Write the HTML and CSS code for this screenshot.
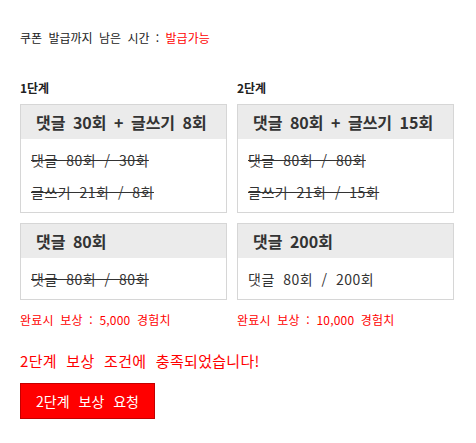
FILE: index.html
```html
<!DOCTYPE html>
<html lang="ko">
<head>
<meta charset="utf-8">
<link rel="stylesheet" href="styles.css">
</head>
<body>
<div class="page">
  <p class="timer">쿠폰 발급까지 남은 시간 : <span class="red">발급가능</span></p>
  <div class="stages">
    <div class="stage">
      <div class="stage-label">1단계</div>
      <div class="box">
        <div class="box-head">댓글 30회 + 글쓰기 8회</div>
        <div class="box-body">
          <div class="line done">댓글 80회 / 30회</div>
          <div class="line done">글쓰기 21회 / 8회</div>
        </div>
      </div>
      <div class="box">
        <div class="box-head">댓글 80회</div>
        <div class="box-body">
          <div class="line done">댓글 80회 / 80회</div>
        </div>
      </div>
      <div class="reward">완료시 보상 : 5,000 경험치</div>
    </div>
    <div class="stage">
      <div class="stage-label">2단계</div>
      <div class="box">
        <div class="box-head">댓글 80회 + 글쓰기 15회</div>
        <div class="box-body">
          <div class="line done">댓글 80회 / 80회</div>
          <div class="line done">글쓰기 21회 / 15회</div>
        </div>
      </div>
      <div class="box">
        <div class="box-head">댓글 200회</div>
        <div class="box-body">
          <div class="line">댓글 80회 / 200회</div>
        </div>
      </div>
      <div class="reward">완료시 보상 : 10,000 경험치</div>
    </div>
  </div>
  <p class="message">2단계 보상 조건에 충족되었습니다!</p>
  <button class="request">2단계 보상 요청</button>
</div>
</body>
</html>
```
FILE: styles.css
```css
html, body {
  margin: 0;
  padding: 0;
  background: #fff;
}
body {
  font-family: "Noto Sans CJK KR", "Noto Sans", sans-serif;
  color: #333;
}
.page {
  padding: 30px 20px 20px;
}
.timer {
  margin: 0;
  font-size: 12px;
  line-height: 16px;
  color: #222;
  word-spacing: 3px;
}
.red {
  color: #ff0000;
}
.stages {
  display: grid;
  grid-template-columns: 207px 217px;
  column-gap: 10px;
  margin-top: 34px;
}
.stage {
  display: flex;
  flex-direction: column;
}
.stage-label {
  font-size: 12px;
  font-weight: 700;
  line-height: 16px;
  color: #222;
  margin-bottom: 8px;
}
.box {
  border: 1px solid #d6d6d6;
  margin-bottom: 10px;
}
.box-head {
  background: #ebebeb;
  height: 34px;
  line-height: 34px;
  padding: 0 15px;
  font-size: 16px;
  font-weight: 700;
  color: #333;
  word-spacing: 3px;
  white-space: nowrap;
}
.box-body {
  padding: 5px 10px 4px;
}
.line {
  font-size: 14px;
  line-height: 32px;
  color: #333;
  word-spacing: 4px;
  letter-spacing: 0.5px;
  white-space: nowrap;
}
.done {
  text-decoration: line-through;
}
.reward {
  margin-top: 2px;
  font-size: 12px;
  line-height: 16px;
  color: #ff0000;
  word-spacing: 3px;
  letter-spacing: 0.2px;
}
.message {
  margin: 23px 0 12px;
  font-size: 15px;
  line-height: 20px;
  color: #ff0000;
  word-spacing: 5px;
  letter-spacing: 0.3px;
}
.request {
  display: block;
  width: 135px;
  height: 36px;
  background: #ff0000;
  border: 1px solid #c40000;
  color: #fff;
  font-family: "Noto Sans CJK KR", "Noto Sans", sans-serif;
  font-size: 14px;
  word-spacing: 5px;
  padding: 0;
  cursor: pointer;
}
```
